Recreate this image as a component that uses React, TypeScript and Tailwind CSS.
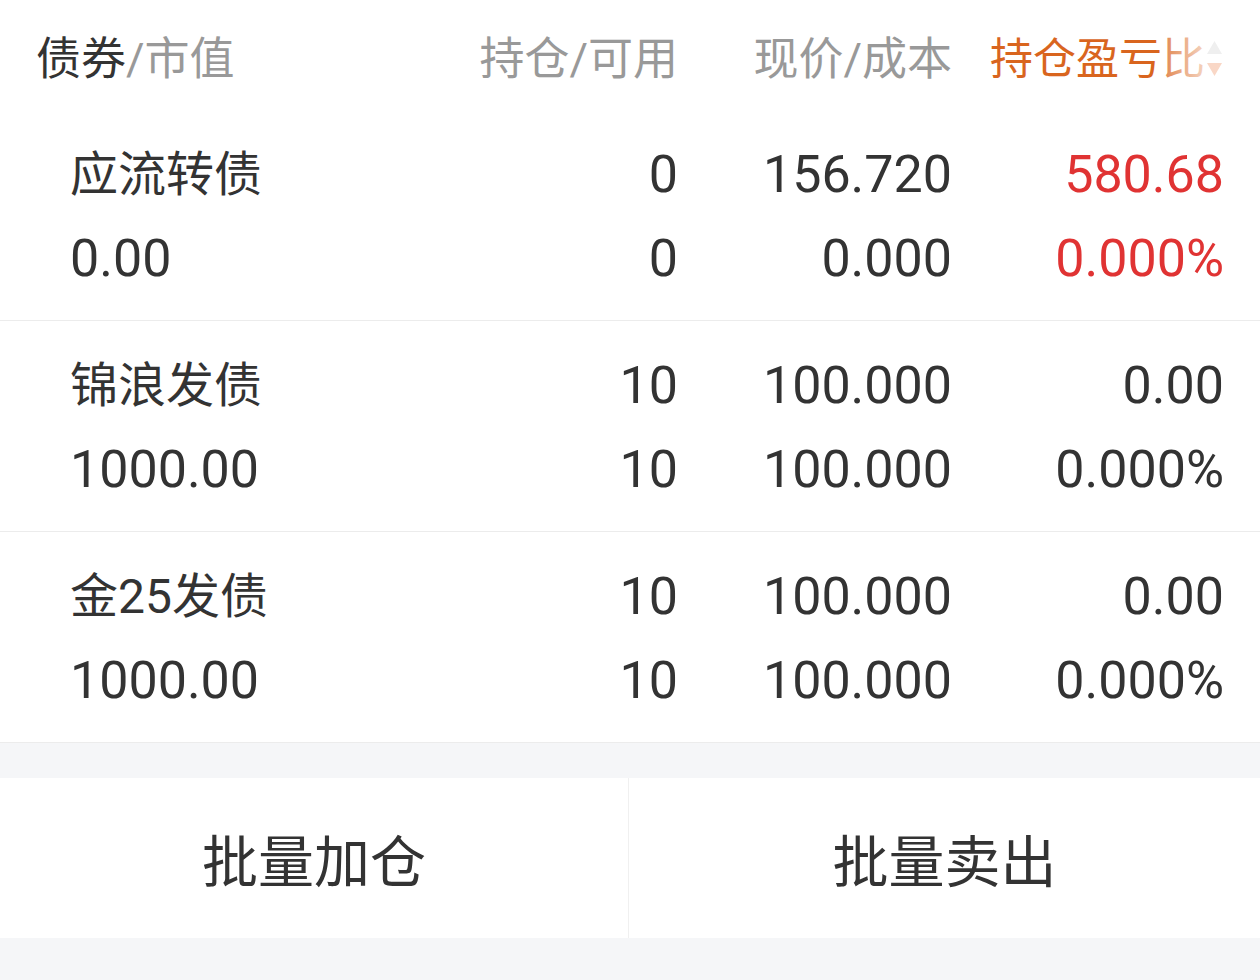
import React from "react";

const font = { fontFamily: 'Roboto, "Noto Sans CJK SC", sans-serif' };

type Row = {
  name: string;
  value: string;
  hold: string;
  avail: string;
  price: string;
  cost: string;
  pl: string;
  ratio: string;
  red?: boolean;
};

const rows: Row[] = [
  { name: "应流转债", value: "0.00", hold: "0", avail: "0", price: "156.720", cost: "0.000", pl: "580.68", ratio: "0.000%", red: true },
  { name: "锦浪发债", value: "1000.00", hold: "10", avail: "10", price: "100.000", cost: "100.000", pl: "0.00", ratio: "0.000%" },
  { name: "金25发债", value: "1000.00", hold: "10", avail: "10", price: "100.000", cost: "100.000", pl: "0.00", ratio: "0.000%" },
];

export default function App() {
  return (
    <div className="w-[1260px] h-[980px] bg-[#f5f6f8] text-[#333]" style={font}>
      <div className="bg-white">
        {/* header */}
        <div className="flex items-center h-[110px] pt-[8px] px-[36px] text-[45px] leading-none">
          <div className="flex-1">
            <span className="text-[#333]">债券</span>
            <span className="text-[#999]">/市值</span>
          </div>
          <div className="w-[278px] text-right text-[#999]">持仓/可用</div>
          <div className="w-[274px] text-right text-[#999]">现价/成本</div>
          <div className="w-[272px] text-right relative text-[#d9651e] whitespace-nowrap text-[43px] pr-[19px]">
            <span>持仓盈亏比</span>
            <div className="absolute right-[17px] top-[-6px] bottom-[-6px] w-[46px] bg-gradient-to-r from-white/20 to-white/75" />
            <svg className="absolute right-[1px] top-[3px]" width="17" height="36" viewBox="0 0 17 36">
              <polygon points="8.5,0 16,13 1,13" fill="#efefef" />
              <polygon points="1,22 16,22 8.5,35" fill="#f9d7c6" />
            </svg>
          </div>
        </div>
        {rows.map((r, i) => (
          <div
            key={i}
            className="px-[36px] pt-[23px] pb-[19px] border-b border-[#ececec] text-[52px] leading-[84px]"
          >
            <div className="flex">
              <div className="flex-1 pl-[34px] text-[48px]">{r.name}</div>
              <div className="w-[278px] text-right">{r.hold}</div>
              <div className="w-[274px] text-right">{r.price}</div>
              <div className={`w-[272px] text-right ${r.red ? "text-[#e03333]" : ""}`}>{r.pl}</div>
            </div>
            <div className="flex">
              <div className="flex-1 pl-[34px]">{r.value}</div>
              <div className="w-[278px] text-right">{r.avail}</div>
              <div className="w-[274px] text-right">{r.cost}</div>
              <div className={`w-[272px] text-right ${r.red ? "text-[#e03333]" : ""}`}>{r.ratio}</div>
            </div>
          </div>
        ))}
      </div>
      <div className="h-[35px]" />
      <div className="flex h-[160px] bg-white text-[56px] text-[#333]">
        <div className="w-[629px] flex items-center justify-center pt-[10px] border-r border-[#f0f0f0]">批量加仓</div>
        <div className="flex-1 flex items-center justify-center pt-[10px]">批量卖出</div>
      </div>
    </div>
  );
}
